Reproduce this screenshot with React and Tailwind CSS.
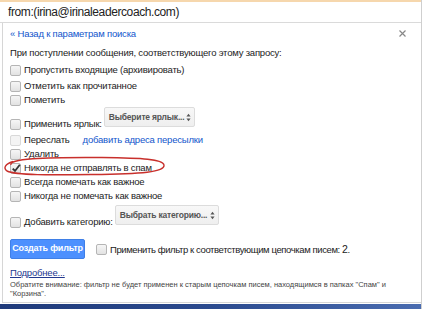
import React from "react";

function Box({ checked = false, disabled = false }) {
  return (
    <span
      className={
        "relative inline-block w-[11px] h-[11px] shrink-0 rounded-[2px] border " +
        (disabled
          ? "border-[#d9d9d9] bg-[#f4f4f4]"
          : "border-[#b5b5b5] bg-gradient-to-b from-[#f6f6f6] to-[#e2e2e2]")
      }
    >
      {checked && (
        <svg viewBox="0 0 11 11" className="absolute left-[-1px] top-[-2px] w-[12px] h-[12px]">
          <path d="M2.5 6 L4.6 8.2 L9 2.5" fill="none" stroke="#333" strokeWidth="1.7" />
        </svg>
      )}
    </span>
  );
}

function Row({ children, checked, disabled, className = "" }) {
  return (
    <div className={"flex items-center h-[14px] gap-[2px] shrink-0 whitespace-nowrap " + className}>
      <Box checked={checked} disabled={disabled} />
      <span className="ml-[1px] leading-none">{children}</span>
    </div>
  );
}

function Select({ label, className = "" }) {
  return (
    <div
      className={
        "flex shrink-0 whitespace-nowrap items-center justify-between h-[20px] rounded-[2px] border border-[#dcdcdc] bg-gradient-to-b from-[#f8f8f8] to-[#efefef] pl-[4px] pr-[3px] text-[8.5px] font-bold tracking-[-0.2px] text-[#555] " +
        className
      }
    >
      <span>{label}</span>
      <svg viewBox="0 0 6 10" className="w-[5px] h-[9px]">
        <path d="M3 0.5 L5.5 3.8 L0.5 3.8 Z" fill="#555" />
        <path d="M3 9.5 L5.5 6.2 L0.5 6.2 Z" fill="#555" />
      </svg>
    </div>
  );
}

export default function App() {
  return (
    <div className="relative w-[424px] h-[309px] overflow-hidden bg-white font-['Liberation_Sans',Arial,sans-serif] text-[#222]">
      <div className="w-[422px] h-[309px] border-r border-[#cfcfcf] flex flex-col">
        <div className="h-[2px] bg-[#f6d7ad]" />
        <div className="h-[21px] border-b border-[#dadada] flex items-center pl-[8px] text-[12px] tracking-[-0.4px] text-[#222]">
          from:(irina@irinaleadercoach.com)
        </div>
        <div className="relative flex-1 ml-[2px] border-l border-b border-[#d6d6d6] pl-[7px] text-[9.5px] tracking-[-0.2px]">
          <div className="flex items-center justify-between h-[14px] mt-[4px] pr-[15px]">
            <span className="text-[#1155cc] leading-none">« Назад к параметрам поиска</span>
            <svg viewBox="0 0 7 7" className="w-[7px] h-[7px] mt-[-2px]">
              <path d="M0.5 0.5 L6.5 6.5 M6.5 0.5 L0.5 6.5" stroke="#888" strokeWidth="1.2" />
            </svg>
          </div>
          <div className="flex items-center h-[14px] mt-[5px] leading-none whitespace-nowrap">
            При поступлении сообщения, соответствующего этому запросу:
          </div>
          <Row className="mt-[3px]">Пропустить входящие (архивировать)</Row>
          <Row className="mt-[2px]">Отметить как прочитанное</Row>
          <Row>Пометить</Row>
          <div className="flex items-start h-[23px]">
            <Row className="mt-[10px]">Применить ярлык:</Row>
            <Select label="Выберите ярлык..." className="ml-[2px] mt-[0px] w-[91px]" />
          </div>
          <div className="flex items-center h-[14px] mt-[3px] gap-[2px] whitespace-nowrap">
            <Box disabled />
            <span className="ml-[1px] leading-none">Переслать</span>
            <span className="ml-[11px] leading-none text-[#1155cc]">добавить адреса пересылки</span>
          </div>
          <Row>Удалить</Row>
          <Row checked>Никогда не отправлять в спам</Row>
          <Row>Всегда помечать как важное</Row>
          <Row>Никогда не помечать как важное</Row>
          <div className="flex items-start h-[26px]">
            <Row className="mt-[12px]">Добавить категорию:</Row>
            <Select label="Выбрать категорию..." className="ml-[2px] mt-[2px] w-[104px]" />
          </div>
          <div className="flex items-center mt-[10px] h-[20px] whitespace-nowrap">
            <div className="flex shrink-0 items-center justify-center w-[75px] h-[20px] rounded-[2px] bg-[#4d90fe] border border-[#3f7fe6] text-white text-[9px] font-bold tracking-[-0.2px]">
              Создать фильтр
            </div>
            <div className="flex items-center ml-[11px] gap-[2px]">
              <Box />
              <span className="ml-[1px] leading-none tracking-[-0.4px]">
                Применить фильтр к соответствующим цепочкам писем: <span className="text-[10.5px]">2</span>.
              </span>
            </div>
          </div>
          <div className="flex items-center h-[14px] mt-[7px] leading-none text-[#23398f] underline">
            Подробнее...
          </div>
          <div className="text-[7.5px] leading-[9px] text-[#444] tracking-[0px] pr-[20px]">
            Обратите внимание: фильтр не будет применен к старым цепочкам писем, находящимся в папках "Спам" и "Корзина".
          </div>
          <svg
            viewBox="0 0 170 30"
            className="absolute left-[-1px] top-[132px] w-[170px] h-[30px] pointer-events-none"
          >
            <path
              d="M9 10 C 6 4, 40 2, 100 2.5 C 140 3, 161 4, 162 10 C 163 17, 140 19, 90 19.5 C 50 20, 14 20.5, 5 16 C 1 13, 3 9, 11 6.5"
              fill="none"
              stroke="#c8302c"
              strokeWidth="1.4"
            />
          </svg>
        </div>
        <div className="h-[5px] mt-[1px] bg-gradient-to-r from-[#1f3a7a] via-[#2b4a8e] to-[#4a6cb0]" />
      </div>
    </div>
  );
}
